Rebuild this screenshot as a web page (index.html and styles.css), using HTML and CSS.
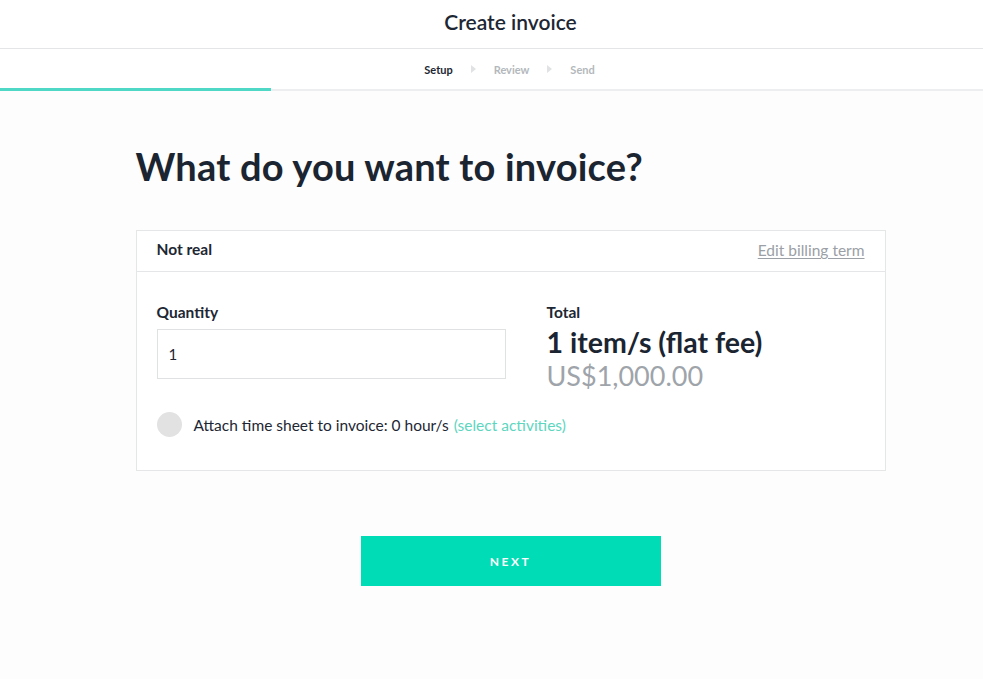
FILE: index.html
```html
<!DOCTYPE html>
<html lang="en">
<head>
<meta charset="utf-8">
<title>Create invoice</title>
<link rel="stylesheet" href="styles.css">
</head>
<body>
<div class="page">
<header class="topbar">
  <h1 class="topbar-title">Create invoice</h1>
</header>
<nav class="steps">
  <div class="steps-list">
    <span class="step step-active">Setup</span>
    <span class="step-arrow"></span>
    <span class="step">Review</span>
    <span class="step-arrow"></span>
    <span class="step">Send</span>
  </div>
  <div class="steps-progress"></div>
</nav>
<main class="content">
  <h2 class="question">What do you want to invoice?</h2>
  <section class="card">
    <div class="card-head">
      <span class="card-name">Not real</span>
      <a class="card-edit" href="#">Edit billing term</a>
    </div>
    <div class="card-body">
      <div class="card-row">
        <div class="field">
          <label class="label">Quantity</label>
          <div class="input">1</div>
        </div>
        <div class="total">
          <div class="label total-label">Total</div>
          <div class="total-items">1 item/s (flat fee)</div>
          <div class="total-amount">US$1,000.00</div>
        </div>
      </div>
      <div class="attach">
        <span class="toggle"></span>
        <span class="attach-text">Attach time sheet to invoice: 0 hour/s</span>
        <a class="attach-link" href="#">(select activities)</a>
      </div>
    </div>
  </section>
  <div class="actions">
    <button class="btn-next">NEXT</button>
  </div>
</main>
</div>
</body>
</html>
```
FILE: styles.css
```css
* { box-sizing: border-box; }
html, body { margin: 0; padding: 0; }
body {
  background: #fdfdfd;
  font-family: Lato, "Liberation Sans", sans-serif;
  color: #1d2733;
  width: 983px;
  height: 679px;
  overflow: hidden;
}
.page {
  width: 1021px;
}
.topbar {
  height: 49px;
  border-bottom: 1px solid #e3e5e7;
  display: flex;
  align-items: center;
  justify-content: center;
  background: #fff;
}
.topbar-title {
  margin: 0;
  font-size: 21px;
  font-weight: 600;
  color: #1d2733;
  padding-bottom: 6px;
}
.steps {
  position: relative;
  height: 42px;
  border-bottom: 2px solid #eceeef;
  background: #fff;
  display: flex;
  align-items: center;
  justify-content: center;
}
.steps-list {
  display: flex;
  align-items: center;
  gap: 16px;
  font-size: 11px;
  font-weight: 700;
  margin-left: -2px;
}
.step { color: #b3b8bc; }
.step-active { color: #1d2733; }
.step-arrow {
  width: 0; height: 0;
  border-left: 5px solid #e0e2e4;
  border-top: 4px solid transparent;
  border-bottom: 4px solid transparent;
  margin: 0 2px;
}
.steps-progress {
  position: absolute;
  left: 0;
  bottom: -2px;
  width: 271px;
  height: 3px;
  background: #4fd8c6;
}
.content {
  width: 750px;
  margin: 0 auto;
  padding-top: 52px;
}
.question {
  margin: 0 0 41px;
  font-size: 38px;
  font-weight: 700;
  color: #1b2531;
  line-height: 46px;
  letter-spacing: 0.2px;
}
.card {
  background: #fff;
  border: 1px solid #e4e6e8;
}
.card-head {
  height: 41px;
  border-bottom: 1px solid #e4e6e8;
  display: flex;
  align-items: center;
  justify-content: space-between;
  padding: 0 20px 4px;
}
.card-name {
  font-size: 15.5px;
  font-weight: 700;
  color: #1d2733;
}
.card-edit {
  font-size: 15.5px;
  color: #9aa0a6;
  text-decoration: underline;
  text-underline-offset: 2px;
  margin-top: 2px;
}
.card-body {
  padding: 31px 20px 33px;
}
.card-row {
  display: flex;
  gap: 41px;
}
.field { width: 349px; }
.label {
  display: block;
  font-size: 15.5px;
  font-weight: 700;
  color: #1d2733;
  line-height: 18px;
  margin-bottom: 8px;
}
.total-label { margin-bottom: 6px; }
.input {
  height: 50px;
  border: 1px solid #dfe1e3;
  background: #fff;
  padding: 0 11px;
  display: flex;
  align-items: center;
  font-size: 15px;
  color: #1d2733;
}
.total-items {
  font-size: 28.5px;
  font-weight: 700;
  color: #1b2531;
  line-height: 30px;
  margin-top: 0;
}
.total-amount {
  font-size: 27px;
  color: #9ea4aa;
  line-height: 34px;
  margin-top: 2px;
}
.attach {
  display: flex;
  align-items: center;
  margin-top: 19px;
  font-size: 15.5px;
}
.toggle {
  width: 25px;
  height: 25px;
  border-radius: 50%;
  background: #e2e2e2;
  margin-right: 12px;
}
.attach-text { color: #1d2733; }
.attach-link {
  color: #5dd6c0;
  text-decoration: none;
  margin-left: 5px;
}
.actions {
  display: flex;
  justify-content: center;
  margin-top: 65px;
}
.btn-next {
  width: 300px;
  height: 50px;
  border: none;
  background: #00dcb5;
  color: #fff;
  font-family: inherit;
  font-size: 12px;
  font-weight: 700;
  letter-spacing: 2.5px;
  cursor: pointer;
}
```
